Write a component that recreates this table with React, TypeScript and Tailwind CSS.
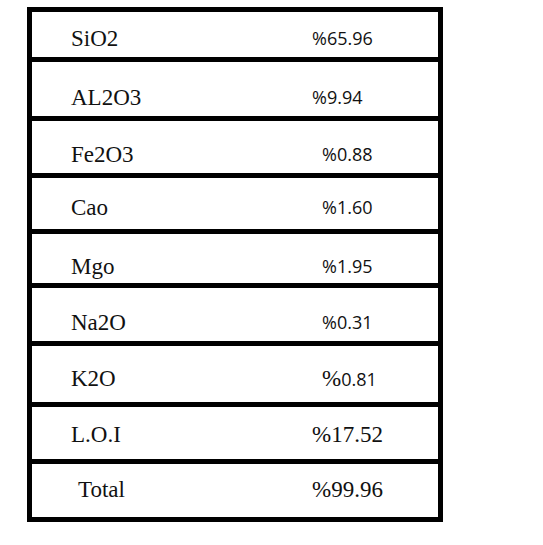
import React from "react";

type Row = {
  label: string;
  labelPad?: string;
  value: React.ReactNode;
  h: string;
  pad: string;
  valPad: string;
};

const sans = "font-['Open_Sans',sans-serif] text-[18px] text-[#111]";
const serif = "font-['Liberation_Serif',serif] text-[23px] text-[#111]";

const rows: Row[] = [
  { label: "SiO2", value: <span className={sans}>%65.96</span>, h: "h-[45px]", pad: "pt-[7px]", valPad: "pl-[0px]" },
  { label: "AL2O3", value: <span className={sans}>%9.94</span>, h: "h-[59px]", pad: "pt-[16px]", valPad: "pl-[0px]" },
  { label: "Fe2O3", value: <span className={sans}>%0.88</span>, h: "h-[57px]", pad: "pt-[14px]", valPad: "pl-[10px]" },
  { label: "Cao", value: <span className={sans}>%1.60</span>, h: "h-[56px]", pad: "pt-[7px]", valPad: "pl-[10px]" },
  { label: "Mgo", value: <span className={sans}>%1.95</span>, h: "h-[54px]", pad: "pt-[15px]", valPad: "pl-[10px]" },
  { label: "Na2O", value: <span className={sans}>%0.31</span>, h: "h-[58px]", pad: "pt-[15px]", valPad: "pl-[10px]" },
  {
    label: "K2O",
    value: (
      <span>
        <span className={serif}>%</span>
        <span className={sans}>0.81</span>
      </span>
    ),
    h: "h-[61px]",
    pad: "pt-[8px]",
    valPad: "pl-[10px]",
  },
  { label: "L.O.I", value: <span className={serif}>%17.52</span>, h: "h-[57px]", pad: "pt-[2px]", valPad: "pl-[0px]" },
  { label: "Total", labelPad: "pl-[46px]", value: <span className={serif}>%99.96</span>, h: "h-[58px]", pad: "pb-[3px]", valPad: "pl-[0px]" },
];

export default function App() {
  return (
    <div className="w-[543px] h-[545px] bg-white pt-[7px] pl-[27px]">
      <div className="w-[416px] border-[5px] border-black flex flex-col">
        {rows.map((r, i) => (
          <div
            key={r.label}
            className={`flex items-center ${r.pad} ${r.h} ${i > 0 ? "border-t-[5px] border-black" : ""}`}
          >
            <div className={`w-[280px] ${r.labelPad ?? "pl-[39px]"} ${serif} leading-none`}>{r.label}</div>
            <div className={`${r.valPad} leading-none`}>{r.value}</div>
          </div>
        ))}
      </div>
    </div>
  );
}
